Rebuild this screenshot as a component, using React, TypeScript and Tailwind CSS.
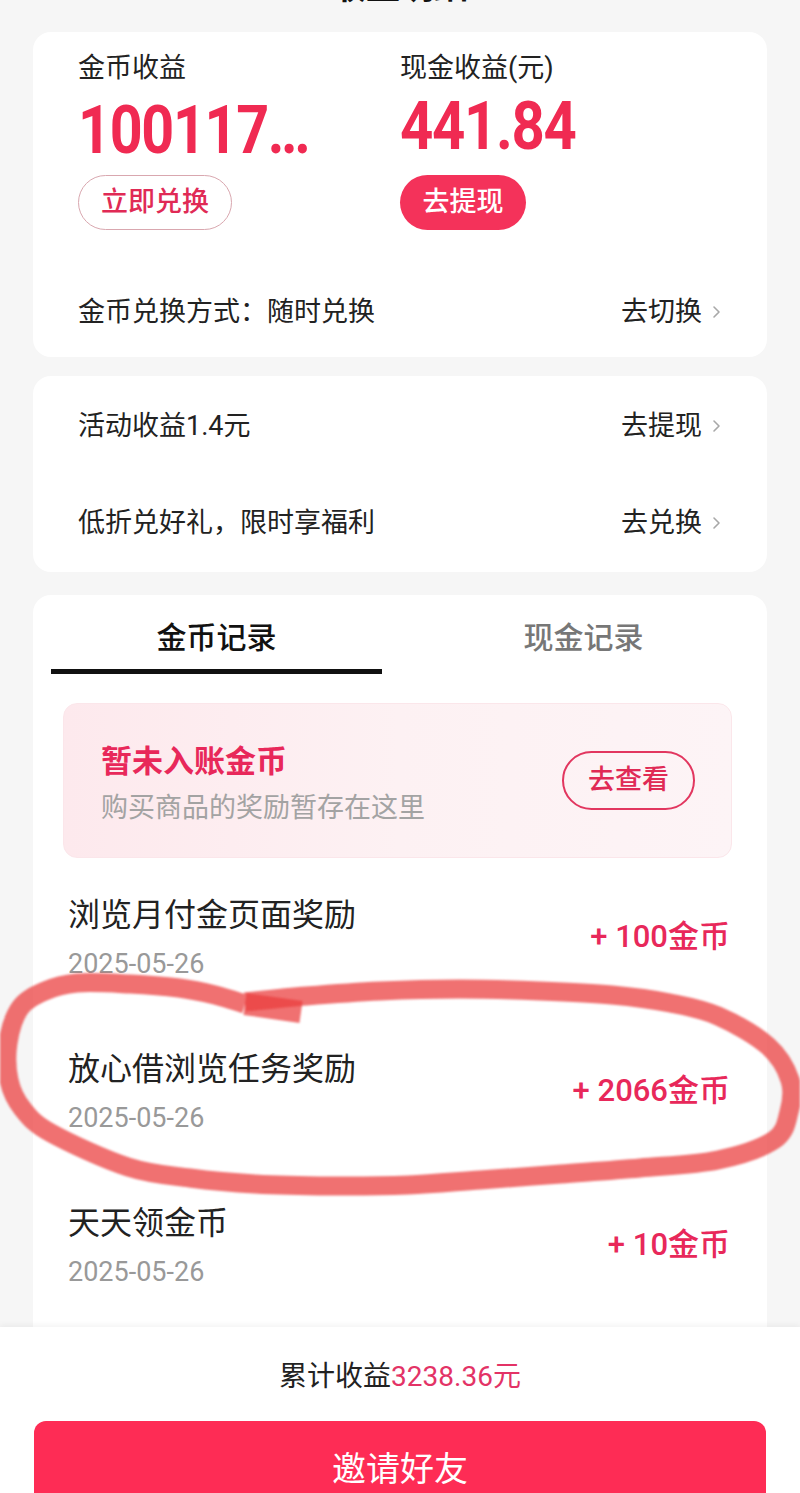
import React from "react";

type Pt = [number, number];

function smoothPath(pts: Pt[]): string {
  let d = `M${pts[0][0]},${pts[0][1]}`;
  for (let i = 0; i < pts.length - 1; i++) {
    const p0 = pts[i - 1] || pts[i];
    const p1 = pts[i];
    const p2 = pts[i + 1];
    const p3 = pts[i + 2] || p2;
    const c1x = p1[0] + (p2[0] - p0[0]) / 6;
    const c1y = p1[1] + (p2[1] - p0[1]) / 6;
    const c2x = p2[0] - (p3[0] - p1[0]) / 6;
    const c2y = p2[1] - (p3[1] - p1[1]) / 6;
    d += ` C${c1x.toFixed(1)},${c1y.toFixed(1)} ${c2x.toFixed(1)},${c2y.toFixed(1)} ${p2[0]},${p2[1]}`;
  }
  return d;
}

const loop: Pt[] = [
  [245, 1002], [306, 996], [380, 991], [459, 989], [540, 991], [612, 995], [670, 1003],
  [718, 1016], [768, 1046], [790, 1080], [789, 1112], [774, 1140], [718, 1160], [640, 1168],
  [561, 1174], [480, 1180], [408, 1185], [330, 1186], [255, 1184], [190, 1178], [128, 1167],
  [51, 1133], [22, 1108], [9, 1080], [8, 1043], [20, 1008], [45, 991], [77, 983], [130, 984],
  [179, 988], [215, 995], [245, 1004],
];
const loopD = smoothPath(loop);

function Chevron() {
  return (
    <svg width="10" height="16" viewBox="0 0 10 16" className="ml-[10px]">
      <polyline points="2,3 7,8 2,13" fill="none" stroke="#a8a8a8" strokeWidth="1.6" strokeLinecap="round" strokeLinejoin="round" />
    </svg>
  );
}

function LinkRow({ left, right, h }: { left: string; right: string; h: string }) {
  return (
    <div className={`flex items-center justify-between ${h}`}>
      <span className="text-[27px] leading-[36px] text-[#222]">{left}</span>
      <span className="flex items-center text-[27px] leading-[36px] text-[#222]">
        {right}
        <Chevron />
      </span>
    </div>
  );
}

const records = [
  { title: "浏览月付金页面奖励", date: "2025-05-26", amount: "+ 100金币" },
  { title: "放心借浏览任务奖励", date: "2025-05-26", amount: "+ 2066金币" },
  { title: "天天领金币", date: "2025-05-26", amount: "+ 10金币" },
];

export default function App() {
  return (
    <div className="relative flex flex-col w-[800px] h-[1493px] overflow-hidden bg-[#f6f6f6] font-['Roboto','Noto_Sans_CJK_SC',sans-serif]">
      {/* header (mostly scrolled off) */}
      <div className="grid grid-cols-[1fr_auto_1fr] items-center h-[40px] -mt-[33px] shrink-0">
        <div className="pl-[40px]">
          <svg width="20" height="24" viewBox="0 0 20 24">
            <polyline points="14,3 5,12 14,21" fill="none" stroke="#111" strokeWidth="2.5" />
          </svg>
        </div>
        <span className="text-[34px] leading-[40px] font-bold text-[#111]">收益明细</span>
        <div className="flex justify-end pr-[65px]">
          <span className="text-[29px] leading-[40px] text-[#666]">收益规则</span>
        </div>
      </div>

      <div className="flex-1 min-h-0 overflow-hidden px-[33px] flex flex-col">
        {/* card 1 */}
        <div className="mt-[25px] bg-white rounded-[18px] px-[45px] pt-[20px] pb-[27px] shrink-0">
          <div className="grid grid-cols-2">
            <div className="flex flex-col items-start">
              <div className="text-[27px] leading-[32px] text-[#222]">金币收益</div>
              <div className="mt-[17px] h-[60px] leading-[60px] text-[66px] font-bold text-[#f02a52] tracking-[-1.5px] scale-x-[0.87] origin-left whitespace-nowrap">
                100117<span className="tracking-[-4px]">...</span>
              </div>
              <button className="mt-[14px] w-[154px] h-[55px] rounded-full border border-[#d9a7af] text-[#e02a55] text-[27px] leading-[53px] font-medium">
                立即兑换
              </button>
            </div>
            <div className="flex flex-col items-start">
              <div className="text-[27px] leading-[32px] text-[#222]">现金收益(元)</div>
              <div className="mt-[13px] h-[60px] leading-[60px] text-[66px] font-bold text-[#f02a52] tracking-[-1.5px] scale-x-[0.88] origin-left whitespace-nowrap">
                441.84
              </div>
              <button className="mt-[18px] w-[126px] h-[55px] rounded-full bg-[#f4325a] text-white text-[27px] leading-[55px] font-medium">
                去提现
              </button>
            </div>
          </div>
          <div className="mt-[64px]">
            <LinkRow left="金币兑换方式：随时兑换" right="去切换" h="h-[36px]" />
          </div>
        </div>

        {/* card 2 */}
        <div className="mt-[19px] bg-white rounded-[18px] px-[45px] py-[1px] shrink-0">
          <LinkRow left="活动收益1.4元" right="去提现" h="h-[97px]" />
          <LinkRow left="低折兑好礼，限时享福利" right="去兑换" h="h-[97px]" />
        </div>

        {/* card 3 */}
        <div className="mt-[23px] bg-white rounded-t-[18px] flex-1 min-h-0 overflow-hidden">
          <div className="grid grid-cols-2 pt-[23px]">
            <div className="flex flex-col items-center">
              <span className="text-[30px] leading-[40px] font-medium text-[#111]">金币记录</span>
              <div className="mt-[11px] h-[5px] w-[331px] bg-[#111]" />
            </div>
            <div className="flex flex-col items-center">
              <span className="text-[30px] leading-[40px] font-medium text-[#777]">现金记录</span>
            </div>
          </div>

          <div className="ml-[30px] mr-[35px] mt-[29px] h-[155px] rounded-[14px] border border-[#fbe6ea] bg-gradient-to-r from-[#fde9ed] via-[#fdf1f3] to-[#fdf4f6] flex items-center justify-between pl-[37px] pr-[36px]">
            <div className="flex flex-col pt-[7px]">
              <span className="text-[31px] leading-[38px] font-bold text-[#e8285a]">暂未入账金币</span>
              <span className="mt-[10px] text-[27px] leading-[34px] text-[#a3a3a3]">购买商品的奖励暂存在这里</span>
            </div>
            <button className="w-[133px] h-[59px] rounded-full border-2 border-[#e2365f] text-[#e02a55] text-[27px] leading-[55px] font-medium">
              去查看
            </button>
          </div>

          <div className="mt-[2px] pl-[35px] pr-[37px]">
            {records.map((r) => (
              <div key={r.title} className="h-[154px] flex items-center justify-between">
                <div className="flex flex-col">
                  <span className="text-[32px] leading-[40px] text-[#222]">{r.title}</span>
                  <span className="mt-[13px] text-[27px] leading-[32px] text-[#999]">{r.date}</span>
                </div>
                <span className="text-[31px] leading-[40px] font-medium text-[#e8285a]">{r.amount}</span>
              </div>
            ))}
          </div>
        </div>
      </div>

      {/* bottom bar */}
      <div className="relative h-[166px] shrink-0 bg-white shadow-[0_-2px_6px_rgba(0,0,0,0.05)] flex flex-col">
        <div className="pt-[32px] text-center text-[28px] leading-[36px] text-[#222]">
          累计收益<span className="text-[#e33366]">3238.36元</span>
        </div>
        <button className="mt-[26px] mx-[34px] h-[96px] rounded-[12px] bg-[#fe2c55] text-white text-[34px] leading-[96px]">
          邀请好友
        </button>
      </div>

      {/* hand-drawn annotation */}
      <svg
        className="absolute left-0 top-0 pointer-events-none blur-[0.8px]"
        width="800"
        height="1493"
        viewBox="0 0 800 1493"
      >
        <path d={loopD} fill="none" stroke="rgb(235,60,60)" strokeOpacity="0.73" strokeWidth="19" strokeLinecap="butt" strokeLinejoin="round" />
        <path d="M245,1004 L301,1012" fill="none" stroke="rgb(235,60,60)" strokeOpacity="0.73" strokeWidth="22" strokeLinecap="butt" />
      </svg>
    </div>
  );
}
